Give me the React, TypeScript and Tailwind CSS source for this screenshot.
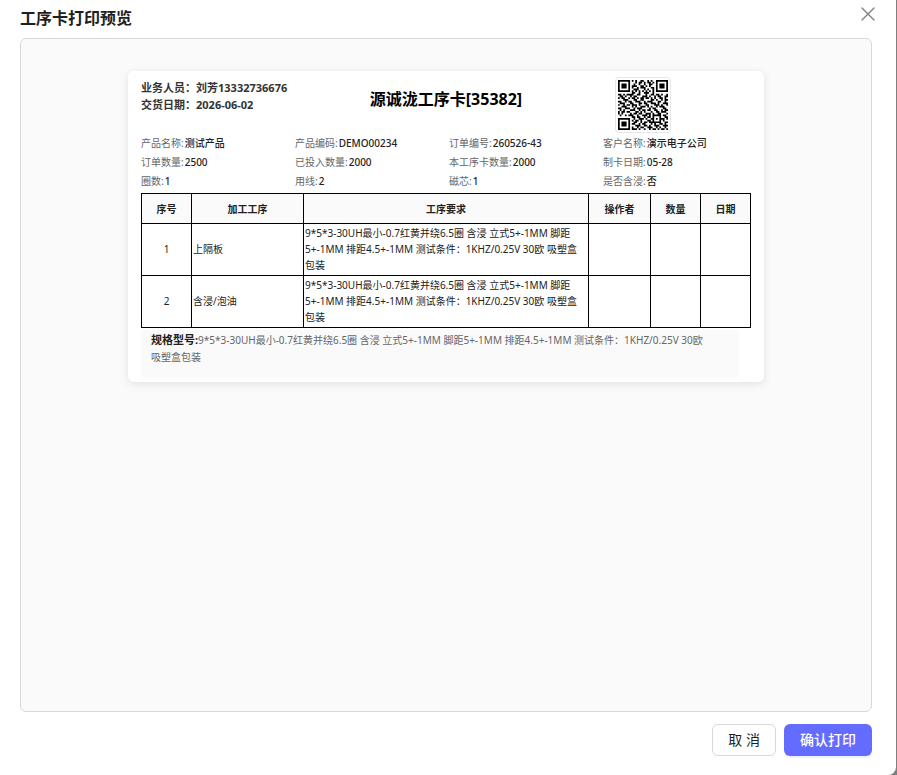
import { X } from 'lucide-react';

interface InfoItem {
  label: string;
  value: string;
}

interface ProcessRow {
  no: number;
  name: string;
  requirement: string;
}

const SPEC =
  '9*5*3-30UH最小-0.7红黄并绕6.5圈 含浸 立式5+-1MM 脚距5+-1MM 排距4.5+-1MM 测试条件：1KHZ/0.25V 30欧 吸塑盒包装';

const INFO: InfoItem[] = [
  { label: '产品名称', value: '测试产品' },
  { label: '产品编码', value: 'DEMO00234' },
  { label: '订单编号', value: '260526-43' },
  { label: '客户名称', value: '演示电子公司' },
  { label: '订单数量', value: '2500' },
  { label: '已投入数量', value: '2000' },
  { label: '本工序卡数量', value: '2000' },
  { label: '制卡日期', value: '05-28' },
  { label: '圈数', value: '1' },
  { label: '用线', value: '2' },
  { label: '磁芯', value: '1' },
  { label: '是否含浸', value: '否' },
];

const ROWS: ProcessRow[] = [
  { no: 1, name: '上隔板', requirement: SPEC },
  { no: 2, name: '含浸/泡油', requirement: SPEC },
];

const COLUMNS = [
  { title: '序号', width: 'w-[50px]' },
  { title: '加工工序', width: 'w-[112px]' },
  { title: '工序要求', width: '' },
  { title: '操作者', width: 'w-[62px]' },
  { title: '数量', width: 'w-[50px]' },
  { title: '日期', width: 'w-[50px]' },
];

// 29 x 29 modules, one string per line
const QR = [
  '11111110101001100101001111111',
  '10000010001011010110101000001',
  '10111010010010010011001011101',
  '10111010111001101010001011101',
  '10111010100101110001101011101',
  '10000010011100010100101000001',
  '11111110101010101010101111111',
  '00000000110010011100100000000',
  '11010111100110001001101101001',
  '01101001011000111010010110011',
  '10110010110101101101010011010',
  '00011100011001100001101001011',
  '11001011001110010111000110010',
  '01110001100011011001110100111',
  '10010110111010001100011101001',
  '00111000101001110101001011100',
  '11001110010111000010110000110',
  '01010001110010110110011001011',
  '10110110001101010001001101110',
  '10100001011011001110100110001',
  '01001011100100111010111110110',
  '00000000110110010110100010011',
  '11111110010011101001101011101',
  '10000010101101000110100010100',
  '10111010011001011011111110011',
  '10111010110010110001010011010',
  '10111010001110011010011100111',
  '10000010100101100111001010010',
  '11111110111010010010110101101',
];

function QrCode() {
  const d = QR.flatMap((line, y) =>
    [...line].map((c, x) => (c === '1' ? `M${x} ${y}h1v1h-1z` : '')),
  ).join('');
  return (
    <div className="rounded border border-gray-200 p-0.5">
      <svg viewBox="0 0 29 29" className="size-[50px]" role="img" aria-label="二维码">
        <path d={d} fill="#000" />
      </svg>
    </div>
  );
}

function ProcessCard() {
  return (
    <article className="mx-auto w-full max-w-[636px] rounded-md bg-white px-[13px] pt-1.5 pb-1 shadow-[0_2px_8px_rgba(0,0,0,0.1)]">
      <header className="grid grid-cols-[1fr_auto_1fr] items-start">
        <div className="pt-0.5 text-[11px] leading-[17px] font-bold text-[#333]">
          <p>业务人员：刘芳13332736676</p>
          <p>交货日期：2026-06-02</p>
        </div>
        <h2 className="pt-2.5 text-base leading-6 font-bold text-black">源诚泷工序卡[35382]</h2>
        <div className="flex justify-end pr-20">
          <QrCode />
        </div>
      </header>

      <dl className="mt-px -mr-1.5 grid grid-cols-4 text-[10px] leading-[19px]">
        {INFO.map((item) => (
          <div key={item.label} className="flex gap-px">
            <dt className="text-[#666]">{item.label}:</dt>
            <dd className="font-medium text-[#222]">{item.value}</dd>
          </div>
        ))}
      </dl>

      <table className="mt-0.5 w-full table-fixed border-collapse text-[10px] leading-4 text-[#222]">
        <thead>
          <tr className="h-[30px] bg-[#fafafa]">
            {COLUMNS.map((col) => (
              <th key={col.title} className={`border border-black font-bold ${col.width}`}>
                {col.title}
              </th>
            ))}
          </tr>
        </thead>
        <tbody>
          {ROWS.map((row) => (
            <tr key={row.no} className="h-[52px]">
              <td className="border border-black px-px pb-0.5 text-center">{row.no}</td>
              <td className="border border-black px-px pb-0.5">{row.name}</td>
              <td className="border border-black pr-1.5 pb-0.5 pl-px">{row.requirement}</td>
              <td className="border border-black" />
              <td className="border border-black" />
              <td className="border border-black" />
            </tr>
          ))}
        </tbody>
      </table>

      <p className="mt-0.5 mr-3 min-h-12 rounded bg-[#fafafa] pt-px pr-7 pl-2.5 text-[10px] leading-[17px] text-[#666]">
        <strong className="text-[11px] font-bold text-[#222]">规格型号:</strong>
        {SPEC}
      </p>
    </article>
  );
}

export default function App() {
  return (
    <div className="flex min-h-screen bg-[#7f7f7f] pr-px font-['Noto_Sans','Noto_Sans_CJK_SC',sans-serif]">
      <div
        role="dialog"
        aria-labelledby="preview-title"
        className="flex flex-1 flex-col rounded-br-lg bg-white pr-6 pb-[19px] pl-5"
      >
        <div className="flex h-[38px] items-start justify-between pt-1.5">
          <h1 id="preview-title" className="text-base leading-6 font-semibold text-[#1f1f1f]">
            工序卡打印预览
          </h1>
          <button type="button" aria-label="关闭" className="-mt-1 -mr-2 text-[#888]">
            <X size={24} strokeWidth={1.5} />
          </button>
        </div>

        <main className="flex-1 rounded-md border border-[#d9d9d9] bg-[#fafafa] px-8 pt-8">
          <ProcessCard />
        </main>

        <footer className="flex justify-end gap-2 pt-3 text-sm">
          <button
            type="button"
            className="h-8 rounded-md border border-[#d9d9d9] bg-white px-[15px] text-[#1f1f1f]"
          >
            取 消
          </button>
          <button
            type="button"
            className="h-8 rounded-md bg-[#646cff] px-4 font-medium text-white shadow-[0_2px_0_rgba(100,108,255,0.1)]"
          >
            确认打印
          </button>
        </footer>
      </div>
    </div>
  );
}
